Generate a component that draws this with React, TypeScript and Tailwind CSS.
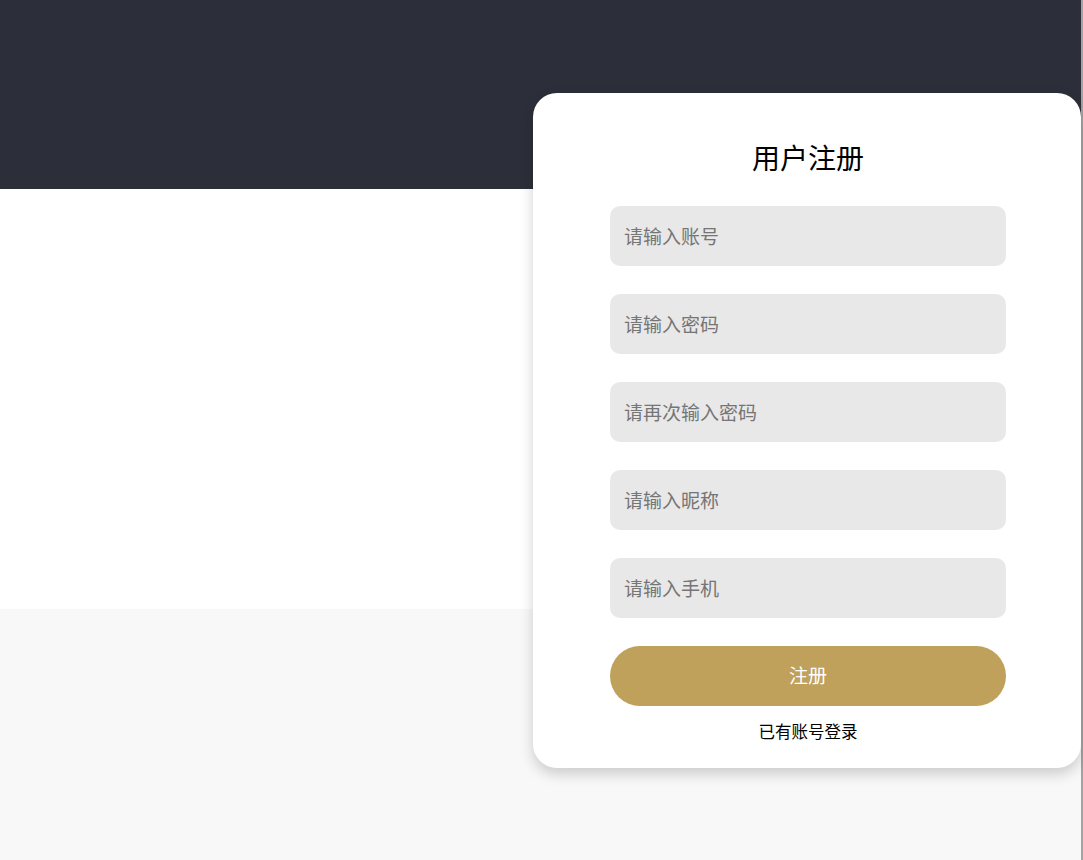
import React from "react";

const fields = ["请输入账号", "请输入密码", "请再次输入密码", "请输入昵称", "请输入手机"];

export default function App() {
  return (
    <div
      className="flex w-full h-[860px] overflow-hidden"
      style={{ fontFamily: '"Noto Sans CJK SC", "Noto Sans", sans-serif' }}
    >
      <div className="relative flex-1 flex flex-col">
        <div className="h-[189px] bg-[#2c2f39]" />
        <div className="h-[420px] bg-white" />
        <div className="flex-1 bg-[#f8f8f8]" />
        <div className="absolute top-[93px] right-0 w-[548px] h-[675px] bg-white rounded-[24px] shadow-[0_6px_14px_rgba(0,0,0,0.18)] flex flex-col items-center pt-[48px] pl-[2px] box-border">
          <h1 className="text-[28px] leading-[32px] text-black font-normal">用户注册</h1>
          <div className="mt-[33px] flex flex-col gap-[28px] w-[396px]">
            {fields.map((f) => (
              <input
                key={f}
                placeholder={f}
                className="h-[60px] w-full rounded-[10px] bg-[#e8e8e8] pl-[14px] pr-[15px] pb-[2px] text-[19px] text-black placeholder:text-[#757575] outline-none border-none"
              />
            ))}
            <button className="h-[60px] w-full rounded-full bg-[#bfa15c] text-white text-[19px] pb-[2px]">
              注册
            </button>
          </div>
          <div className="mt-[15px] text-[16.5px] leading-[20px] text-black">已有账号登录</div>
        </div>
      </div>
      <div className="w-[2px] bg-[#a3a3a3]" />
    </div>
  );
}
